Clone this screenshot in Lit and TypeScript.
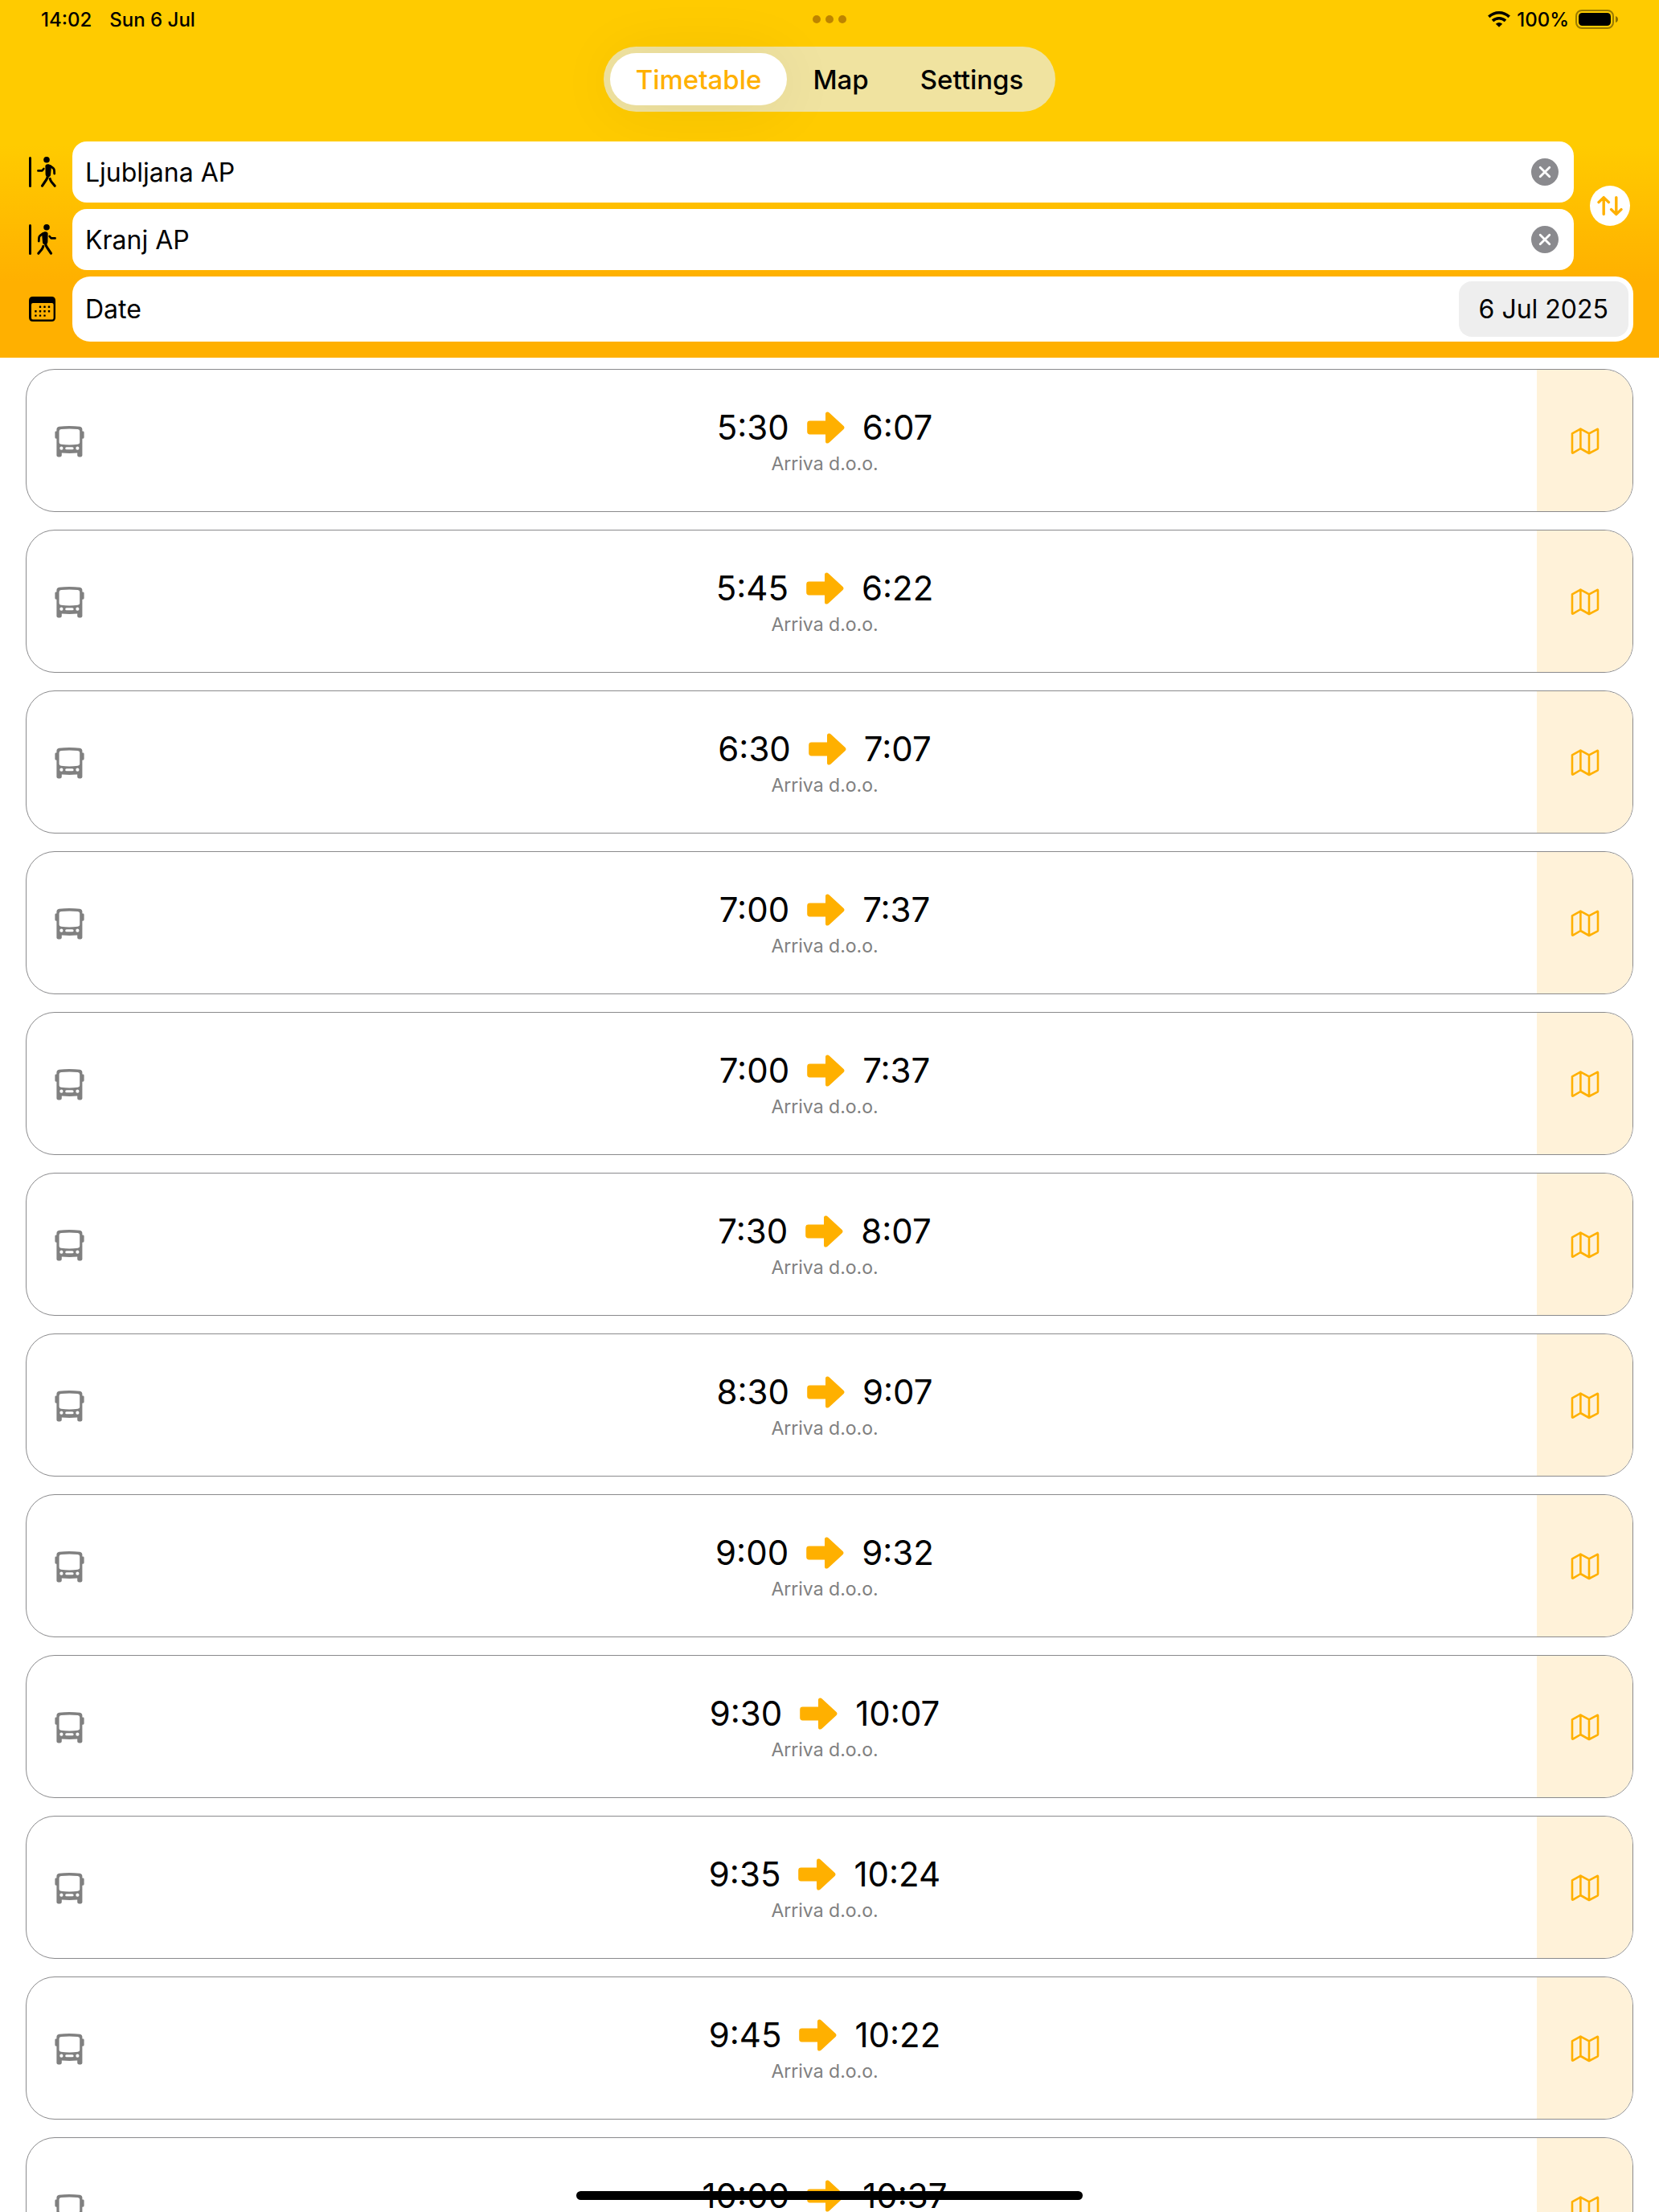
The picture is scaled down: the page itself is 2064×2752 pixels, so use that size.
import { LitElement, html, css, svg } from "lit";
import { customElement, property, state } from "lit/decorators.js";
import { classMap } from "lit/directives/class-map.js";

interface Trip {
  departure: string;
  arrival: string;
  operator: string;
}

const trip = (departure: string, arrival: string): Trip => ({
  departure,
  arrival,
  operator: "Arriva d.o.o.",
});

const TRIPS: Trip[] = [
  trip("5:30", "6:07"),
  trip("5:45", "6:22"),
  trip("6:30", "7:07"),
  trip("7:00", "7:37"),
  trip("7:00", "7:37"),
  trip("7:30", "8:07"),
  trip("8:30", "9:07"),
  trip("9:00", "9:32"),
  trip("9:30", "10:07"),
  trip("9:35", "10:24"),
  trip("9:45", "10:22"),
  trip("10:00", "10:37"),
];

const TABS = ["Timetable", "Map", "Settings"];

const walker = svg`
  <circle cx="22" cy="3.8" r="3.8" fill="currentColor"/>
  <path d="M20.4 11.2C20.8 9.6 22.6 8.8 24.4 9.3C26.4 9.8 27.8 11.2 27.8 13.2L27 22.6C26.8 24.6 25.4 25.6 23.6 25.3C21.6 25 20.6 23.6 20.6 21.6Z" fill="currentColor"/>
  <g fill="none" stroke="currentColor" stroke-linecap="round" stroke-linejoin="round">
    <path stroke-width="2.6" d="M11.4 17.4H16.4L18.4 15"/>
    <path stroke-width="2.8" d="M26.4 11.4L30.4 14.4Q31.4 15.4 31.5 17L31.7 21"/>
    <path stroke-width="3.2" d="M23.6 23.6Q23 26.6 21.6 28.6L16.6 36.2"/>
    <path stroke-width="3" d="M26.2 27.4Q26.8 29.8 28 31.2L32.2 36.3"/>
  </g>`;

@customElement("trip-card")
class TripCard extends LitElement {
  @property({ attribute: false }) trip!: Trip;

  static styles = css`
    :host {
      display: grid;
      grid-template-columns: auto 1fr 119px;
      height: 178px;
      box-sizing: border-box;
      border: 1px solid #8a8a8c;
      border-radius: 36px;
      overflow: hidden;
      background: #fff;
    }
    .vehicle {
      display: flex;
      align-items: center;
      padding: 0 35px;
      color: #808080;
    }
    .summary {
      display: flex;
      flex-direction: column;
      align-items: center;
      justify-content: center;
      gap: 5px;
    }
    .times {
      display: flex;
      align-items: center;
      gap: 22px;
      font-size: 42px;
      line-height: 52px;
      color: #000;
    }
    .operator {
      font-size: 23px;
      line-height: 28px;
      color: #808080;
    }
    .map {
      display: flex;
      align-items: center;
      justify-content: center;
      border: 0;
      padding: 0;
      background: #fff2d9;
      color: #ffb000;
    }
    svg {
      display: block;
    }
  `;

  render() {
    const { departure, arrival, operator } = this.trip;
    return html`
      <div class="vehicle">
        <svg width="37" height="40" viewBox="0 -1 37 40" overflow="visible" aria-hidden="true">
          <path fill="currentColor" fill-rule="evenodd" d="M2.4 7.6V5.4Q2.4 2.4 5.4 1.8Q18.3.2 31.4 1.8Q34.4 2.4 34.4 5.4V7.6H35.2Q36.6 7.6 36.6 9V15.2Q36.6 16.8 34.4 16.8V37.6Q34.4 39.4 32.6 39.4H30Q28.2 39.4 28.2 37.6V34.6Q18.3 35.2 8.8 34.6V37.6Q8.8 39.4 7 39.4H4.2Q2.4 39.4 2.4 37.6V16.8Q.4 16.8.4 15.2V9Q.4 7.6 1.6 7.6ZM8 4.9Q18.3 3.9 28.8 4.9Q31.2 5.2 31.2 7.4V21.4Q31.2 23.4 28.8 23.8Q18.3 25 8 23.8Q5.6 23.4 5.6 21.4V7.4Q5.6 5.2 8 4.9ZM8.4 26.6A2.1 2.1 0 1 0 8.4 30.8A2.1 2.1 0 1 0 8.4 26.6ZM28.4 26.6A2.1 2.1 0 1 0 28.4 30.8A2.1 2.1 0 1 0 28.4 26.6ZM14.8 27.2Q13.2 27.2 13.2 28.7Q13.2 30.2 14.8 30.2H22Q23.6 30.2 23.6 28.7Q23.6 27.2 22 27.2Z"/>
        </svg>
      </div>
      <div class="summary">
        <div class="times">
          <time>${departure}</time>
          <svg width="47" height="40" viewBox="0 0 47 40" aria-hidden="true">
            <path fill="#ffb000" d="M3.6 11.6H23V3Q23 .4 25.4.4Q26.8.4 28 1.8L45.6 18Q47.4 20 45.6 22L28 38.2Q26.8 39.6 25.4 39.6Q23 39.6 23 37V28.4H3.6Q.2 28.4.2 25V15Q.2 11.6 3.6 11.6Z"/>
          </svg>
          <time>${arrival}</time>
        </div>
        <div class="operator">${operator}</div>
      </div>
      <button class="map" aria-label="Show on map">
        <svg width="36" height="34" viewBox="0 -1 36 34" overflow="visible" aria-hidden="true">
          <path fill="none" stroke="currentColor" stroke-width="2.6" stroke-linejoin="round" stroke-linecap="round" d="M2 7.4L12.4 1.6L23 7.4L33.4 1.8Q34 1.6 34 2.4V25.6Q34 26.2 33.4 26.6L23 32L12.4 26L2.8 31.6Q2 31.8 2 31ZM12.4 1.6V26M23 7.4V32"/>
        </svg>
      </button>
    `;
  }
}

@customElement("app-root")
class AppRoot extends LitElement {
  @state() private tab = "Timetable";
  @state() private from = "Ljubljana AP";
  @state() private to = "Kranj AP";

  static styles = css`
    :host {
      display: flex;
      flex-direction: column;
      position: relative;
      height: 100vh;
      overflow: hidden;
      background: #fff;
      color: #000;
      font-family: Inter, "Liberation Sans", sans-serif;
    }
    svg {
      display: block;
    }
    button,
    input {
      font: inherit;
      color: inherit;
      border: 0;
      margin: 0;
      padding: 0;
      background: none;
    }
    .header {
      flex: none;
      background: linear-gradient(#ffcb00 180px, #ffb000 350px);
    }
    .status {
      display: grid;
      grid-template-columns: 1fr auto 1fr;
      align-items: center;
      height: 48px;
      padding: 0 51px;
      font-size: 24px;
      font-weight: 500;
    }
    .clock {
      display: flex;
      gap: 22px;
    }
    .dots {
      display: flex;
      gap: 6px;
    }
    .dot {
      width: 10px;
      height: 10px;
      border-radius: 50%;
      background: #bd8400;
    }
    .power {
      display: flex;
      align-items: center;
      justify-content: flex-end;
      gap: 8px;
    }
    .tabs {
      display: flex;
      width: max-content;
      box-sizing: border-box;
      height: 81px;
      margin: 10px auto 37px;
      padding: 8px;
      border-radius: 41px;
      background: #f0e3a0;
    }
    .tab {
      padding: 0 32px;
      border-radius: 33px;
      font-size: 33px;
      font-weight: 500;
    }
    .tab.active {
      background: #fff;
      color: #ffb000;
      box-shadow: 0 4px 80px rgba(0, 0, 0, 0.07);
    }
    .search {
      display: grid;
      grid-template-columns: 34px 1fr 54px;
      grid-template-rows: 76px 76px 81px;
      column-gap: 20px;
      row-gap: 8px;
      align-items: center;
      padding: 0 32px 20px 36px;
      font-size: 32px;
    }
    .field {
      display: flex;
      align-items: center;
      height: 100%;
      box-sizing: border-box;
      padding: 0 19px 0 16px;
      border-radius: 18px;
      background: #fff;
    }
    .text {
      flex: 1;
      min-width: 0;
      height: 100%;
      outline: none;
    }
    .swap {
      grid-column: 3;
      grid-row: 1 / 3;
      width: 50px;
      height: 50px;
      border-radius: 50%;
      background: #fff;
      color: #ffb000;
    }
    .date {
      grid-column: 2 / 4;
      justify-content: space-between;
      padding-right: 6px;
      border-radius: 22px;
    }
    .day {
      height: 69px;
      padding: 0 25px;
      border-radius: 16px;
      background: #eee;
    }
    .list {
      display: flex;
      flex-direction: column;
      gap: 22px;
      flex: 1;
      min-height: 0;
      overflow: hidden;
      list-style: none;
      margin: 0;
      padding: 14px 32px 0;
    }
    .home {
      position: absolute;
      left: 50%;
      bottom: 15px;
      width: 630px;
      height: 11px;
      border-radius: 6px;
      background: #000;
      transform: translateX(-50%);
    }
  `;

  private swap() {
    [this.from, this.to] = [this.to, this.from];
  }

  private clearIcon() {
    return html`<svg width="34" height="34" viewBox="0 0 34 34" aria-hidden="true">
      <circle cx="17" cy="17" r="17" fill="#8a8a8e" />
      <path d="M11.2 11.2L22.8 22.8M22.8 11.2L11.2 22.8" stroke="#fff" stroke-width="2.8" stroke-linecap="round" />
    </svg>`;
  }

  render() {
    return html`
      <header class="header">
        <div class="status">
          <div class="clock"><time>14:02</time><span>Sun 6 Jul</span></div>
          <div class="dots">
            <span class="dot"></span><span class="dot"></span><span class="dot"></span>
          </div>
          <div class="power">
            <svg width="28" height="20" viewBox="0 0 28 20" aria-hidden="true">
              <g fill="none" stroke="#000" stroke-width="3.6">
                <path d="M1.3 6.9Q6.8 1.8 14 1.8T26.7 6.9" />
                <path d="M6 11.8Q9.4 8.7 14 8.7T22 11.8" />
              </g>
              <path d="M9.8 15.7Q14 12.2 18.2 15.7L14 19.8Z" />
            </svg>
            <span>100%</span>
            <svg width="53" height="24" viewBox="0 0 53 24" aria-hidden="true">
              <rect x="1" y="1" width="46" height="22" rx="7" fill="none" stroke="#000" stroke-opacity=".4" stroke-width="2" />
              <rect x="4" y="4" width="40" height="16" rx="4.5" />
              <path d="M50 8Q53 9 53 12T50 16Z" fill-opacity=".45" />
            </svg>
          </div>
        </div>

        <nav class="tabs">
          ${TABS.map(
            (name) => html`<button
              class=${classMap({ tab: true, active: name === this.tab })}
              @click=${() => (this.tab = name)}
            >${name}</button>`,
          )}
        </nav>

        <div class="search">
          <label for="from" aria-label="From">
            <svg width="34" height="38" viewBox="0 0 34 38" aria-hidden="true">
              <rect width="3" height="38" rx="1.5" />
              ${walker}
            </svg>
          </label>
          <div class="field">
            <input class="text" id="from" .value=${this.from}
              @input=${(e: Event) => (this.from = (e.target as HTMLInputElement).value)} />
            <button aria-label="Clear departure" @click=${() => (this.from = "")}>${this.clearIcon()}</button>
          </div>
          <button class="swap" aria-label="Swap stations" @click=${this.swap}>
            <svg width="50" height="50" viewBox="0 0 50 50" aria-hidden="true">
              <path fill="none" stroke="currentColor" stroke-width="3.4" stroke-linecap="round" stroke-linejoin="round"
                d="M17.2 35.6V14.6M11 20.6L17.2 14.6L23.4 20.6M32.8 14.6V35.6M26.6 29.6L32.8 35.6L39 29.6" />
            </svg>
          </button>

          <label for="to" aria-label="To">
            <svg width="34" height="38" viewBox="0 0 34 38" aria-hidden="true">
              <rect width="3" height="38" rx="1.5" />
              <g transform="translate(44 0) scale(-1 1)">${walker}</g>
            </svg>
          </label>
          <div class="field">
            <input class="text" id="to" .value=${this.to}
              @input=${(e: Event) => (this.to = (e.target as HTMLInputElement).value)} />
            <button aria-label="Clear destination" @click=${() => (this.to = "")}>${this.clearIcon()}</button>
          </div>

          <svg width="34" height="31" viewBox="0 0 34 31" aria-hidden="true">
            <path fill-rule="evenodd" d="M5 0H28Q33 0 33 5V26Q33 31 28 31H5Q0 31 0 26V5Q0 0 5 0ZM5 8Q3 8 3 10V26.4Q3 28.6 5.2 28.6H27.8Q30.6 28.6 30.6 26.4V10Q30.6 8 28.6 8Z" />
            ${[
              [12.8, 11.6], [18.3, 11.6], [23.8, 11.6],
              [7.2, 17], [12.8, 17], [18.3, 17], [23.8, 17],
              [7.2, 22.4], [12.8, 22.4], [18.3, 22.4],
            ].map(([x, y]) => svg`<rect x=${x} y=${y} width="2.4" height="2.4" rx=".5"/>`)}
          </svg>
          <div class="field date">
            <label for="day">Date</label>
            <button class="day" id="day">6 Jul 2025</button>
          </div>
        </div>
      </header>

      <ul class="list">
        ${TRIPS.map((t) => html`<li><trip-card .trip=${t}></trip-card></li>`)}
      </ul>
      <div class="home"></div>
    `;
  }
}
